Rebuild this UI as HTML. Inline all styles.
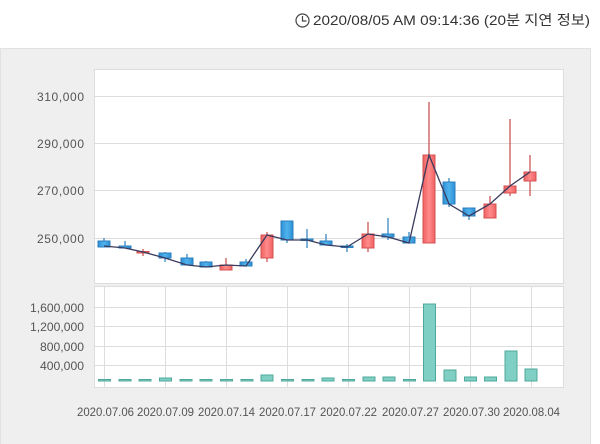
<!DOCTYPE html>
<html><head><meta charset="utf-8"><style>
html,body{margin:0;padding:0;background:#fff;width:600px;height:444px;overflow:hidden}
svg{display:block}
text{font-family:"Liberation Sans","Noto Sans CJK KR",sans-serif;fill:#555}
</style></head><body>
<svg width="600" height="444" viewBox="0 0 600 444">
<defs>
<linearGradient id="bl" x1="0" x2="1"><stop offset="0" stop-color="#2f8fd3"/><stop offset="0.5" stop-color="#4fb2ec"/><stop offset="1" stop-color="#2f8fd3"/></linearGradient>
<linearGradient id="rd" x1="0" x2="1"><stop offset="0" stop-color="#f06262"/><stop offset="0.5" stop-color="#ff8a8a"/><stop offset="1" stop-color="#f06262"/></linearGradient>
</defs>
<!-- header -->
<circle cx="302.5" cy="20.5" r="6.5" fill="none" stroke="#444" stroke-width="1.2"/>
<path d="M302.5 16V21H306.5" fill="none" stroke="#444" stroke-width="1.2"/>
<text x="313" y="25" font-size="14" textLength="277" lengthAdjust="spacingAndGlyphs" style="fill:#333">2020/08/05 AM 09:14:36 (20분 지연 정보)</text>
<!-- panel -->
<rect x="0" y="48" width="591" height="396" fill="#efefef"/>
<rect x="0.5" y="48.5" width="590" height="396" fill="none" stroke="#e2e2e2"/>
<!-- price box -->
<rect x="94.5" y="69.5" width="469" height="214" fill="#fff" stroke="#ddd"/>
<g stroke="#ddd" stroke-width="1">
<line x1="95" x2="563" y1="96.5" y2="96.5"/><line x1="95" x2="563" y1="143.5" y2="143.5"/>
<line x1="95" x2="563" y1="190.5" y2="190.5"/><line x1="95" x2="563" y1="238.5" y2="238.5"/>
</g>
<g font-size="12" lengthAdjust="spacingAndGlyphs">
<text x="37" y="101" textLength="47">310,000</text><text x="37" y="148" textLength="47">290,000</text>
<text x="37" y="195" textLength="47">270,000</text><text x="37" y="243" textLength="47">250,000</text>
</g>
<!-- volume box -->
<rect x="94.5" y="286.5" width="469" height="101" fill="#fff" stroke="#ddd"/>
<g stroke="#ddd">
<line x1="95" x2="563" y1="307.5" y2="307.5"/><line x1="95" x2="563" y1="326.5" y2="326.5"/>
<line x1="95" x2="563" y1="346.5" y2="346.5"/><line x1="95" x2="563" y1="365.5" y2="365.5"/>
<line x1="104.5" x2="104.5" y1="287" y2="387"/><line x1="165.5" x2="165.5" y1="287" y2="387"/>
<line x1="226.5" x2="226.5" y1="287" y2="387"/><line x1="287.5" x2="287.5" y1="287" y2="387"/>
<line x1="348.5" x2="348.5" y1="287" y2="387"/><line x1="409.5" x2="409.5" y1="287" y2="387"/>
<line x1="470.5" x2="470.5" y1="287" y2="387"/><line x1="531.5" x2="531.5" y1="287" y2="387"/>
</g>
<g font-size="12">
<text x="30" y="312" textLength="54" lengthAdjust="spacingAndGlyphs">1,600,000</text>
<text x="30" y="331" textLength="54" lengthAdjust="spacingAndGlyphs">1,200,000</text>
<text x="40" y="351" textLength="44" lengthAdjust="spacingAndGlyphs">800,000</text>
<text x="40" y="370" textLength="44" lengthAdjust="spacingAndGlyphs">400,000</text>
</g>
<g font-size="12">
<text x="77" y="416" textLength="57" lengthAdjust="spacingAndGlyphs">2020.07.06</text>
<text x="137" y="416" textLength="57" lengthAdjust="spacingAndGlyphs">2020.07.09</text>
<text x="198" y="416" textLength="57" lengthAdjust="spacingAndGlyphs">2020.07.14</text>
<text x="259" y="416" textLength="57" lengthAdjust="spacingAndGlyphs">2020.07.17</text>
<text x="320" y="416" textLength="57" lengthAdjust="spacingAndGlyphs">2020.07.22</text>
<text x="382" y="416" textLength="57" lengthAdjust="spacingAndGlyphs">2020.07.27</text>
<text x="443" y="416" textLength="57" lengthAdjust="spacingAndGlyphs">2020.07.30</text>
<text x="503" y="416" textLength="57" lengthAdjust="spacingAndGlyphs">2020.08.04</text>
</g>
<!-- volume bars -->
<g fill="#7fcfc4" stroke="#4fa89b" stroke-width="1">
<rect x="98.5" y="379.5" width="12" height="1.5"/><rect x="119" y="379.5" width="12" height="1.5"/>
<rect x="139" y="379.5" width="12" height="1.5"/><rect x="159.5" y="378" width="12" height="3"/>
<rect x="180" y="379.5" width="12" height="1.5"/><rect x="200" y="379.5" width="12" height="1.5"/>
<rect x="220.5" y="379.5" width="12" height="1.5"/><rect x="241" y="379.5" width="12" height="1.5"/>
<rect x="261" y="375" width="12" height="6"/><rect x="281.5" y="379.5" width="12" height="1.5"/>
<rect x="302" y="379.5" width="12" height="1.5"/><rect x="322" y="378" width="12" height="3"/>
<rect x="342.5" y="379.5" width="12" height="1.5"/><rect x="363" y="377" width="12" height="4"/>
<rect x="383" y="377" width="12" height="4"/><rect x="403.5" y="379.5" width="12" height="1.5"/>
<rect x="423.5" y="304" width="12" height="77"/><rect x="444" y="370" width="12" height="11"/>
<rect x="464.5" y="377" width="12" height="4"/><rect x="484.5" y="377" width="12" height="4"/>
<rect x="505" y="351" width="12" height="30"/><rect x="525" y="369" width="12" height="12"/>
</g>
<!-- wicks -->
<g stroke-width="1.2">
<g stroke="#2a7fbf">
<line x1="104" x2="104" y1="238" y2="247"/><line x1="125" x2="125" y1="241" y2="248"/>
<line x1="165" x2="165" y1="252" y2="262"/><line x1="187" x2="187" y1="254" y2="265"/>
<line x1="206" x2="206" y1="261" y2="267"/><line x1="246" x2="246" y1="259" y2="266"/>
<line x1="287" x2="287" y1="221" y2="243"/><line x1="307" x2="307" y1="229" y2="248"/>
<line x1="326" x2="326" y1="234" y2="245"/><line x1="347" x2="347" y1="244" y2="252"/>
<line x1="388" x2="388" y1="218" y2="240"/><line x1="409" x2="409" y1="232" y2="243"/>
<line x1="449" x2="449" y1="178" y2="207"/><line x1="469" x2="469" y1="208" y2="220"/>
</g>
<g stroke="#c84848">
<line x1="143" x2="143" y1="249" y2="256"/><line x1="226" x2="226" y1="258" y2="270"/>
<line x1="267" x2="267" y1="232" y2="262"/><line x1="368" x2="368" y1="222" y2="252"/>
<line x1="429" x2="429" y1="102" y2="243"/><line x1="490" x2="490" y1="196" y2="218"/>
<line x1="510" x2="510" y1="119" y2="196"/><line x1="530" x2="530" y1="155" y2="196"/>
</g>
</g>
<!-- bodies -->
<g fill="url(#bl)" stroke="#2a7fbf" stroke-width="1">
<rect x="98" y="241" width="12" height="6"/><rect x="119" y="246" width="12" height="2"/>
<rect x="159" y="253" width="12" height="5"/><rect x="181" y="258" width="12" height="7"/>
<rect x="200" y="262" width="12" height="5"/><rect x="240" y="262" width="12" height="4"/>
<rect x="281" y="221" width="12" height="19"/><rect x="301" y="239" width="12" height="1.5"/>
<rect x="320" y="241" width="12" height="4"/><rect x="341" y="246" width="12" height="1.5"/>
<rect x="382" y="234" width="12" height="3"/><rect x="403" y="237" width="12" height="6"/>
<rect x="443" y="182" width="12" height="22"/><rect x="463" y="208" width="12" height="8"/>
</g>
<g fill="url(#rd)" stroke="#d45050" stroke-width="1">
<rect x="137" y="251.5" width="12" height="1.5"/><rect x="220" y="265" width="12" height="5"/>
<rect x="261" y="235" width="12" height="23"/><rect x="362" y="234" width="12" height="14"/>
<rect x="423" y="155" width="12" height="88"/><rect x="484" y="204" width="12" height="14"/>
<rect x="504" y="186" width="12" height="7"/><rect x="524" y="172" width="12" height="9"/>
</g>
<!-- close line -->
<polyline fill="none" stroke="#3a3a5e" stroke-width="1.3" points="104,246 125,248 143,252 165,258 187,265 206,267 226,265 246,266 267,235 287,240 307,240 326,245 347,247 368,234 388,237 409,243 429,155 449,204 469,216 490,204 510,186 530,172"/>
</svg>
</body></html>
